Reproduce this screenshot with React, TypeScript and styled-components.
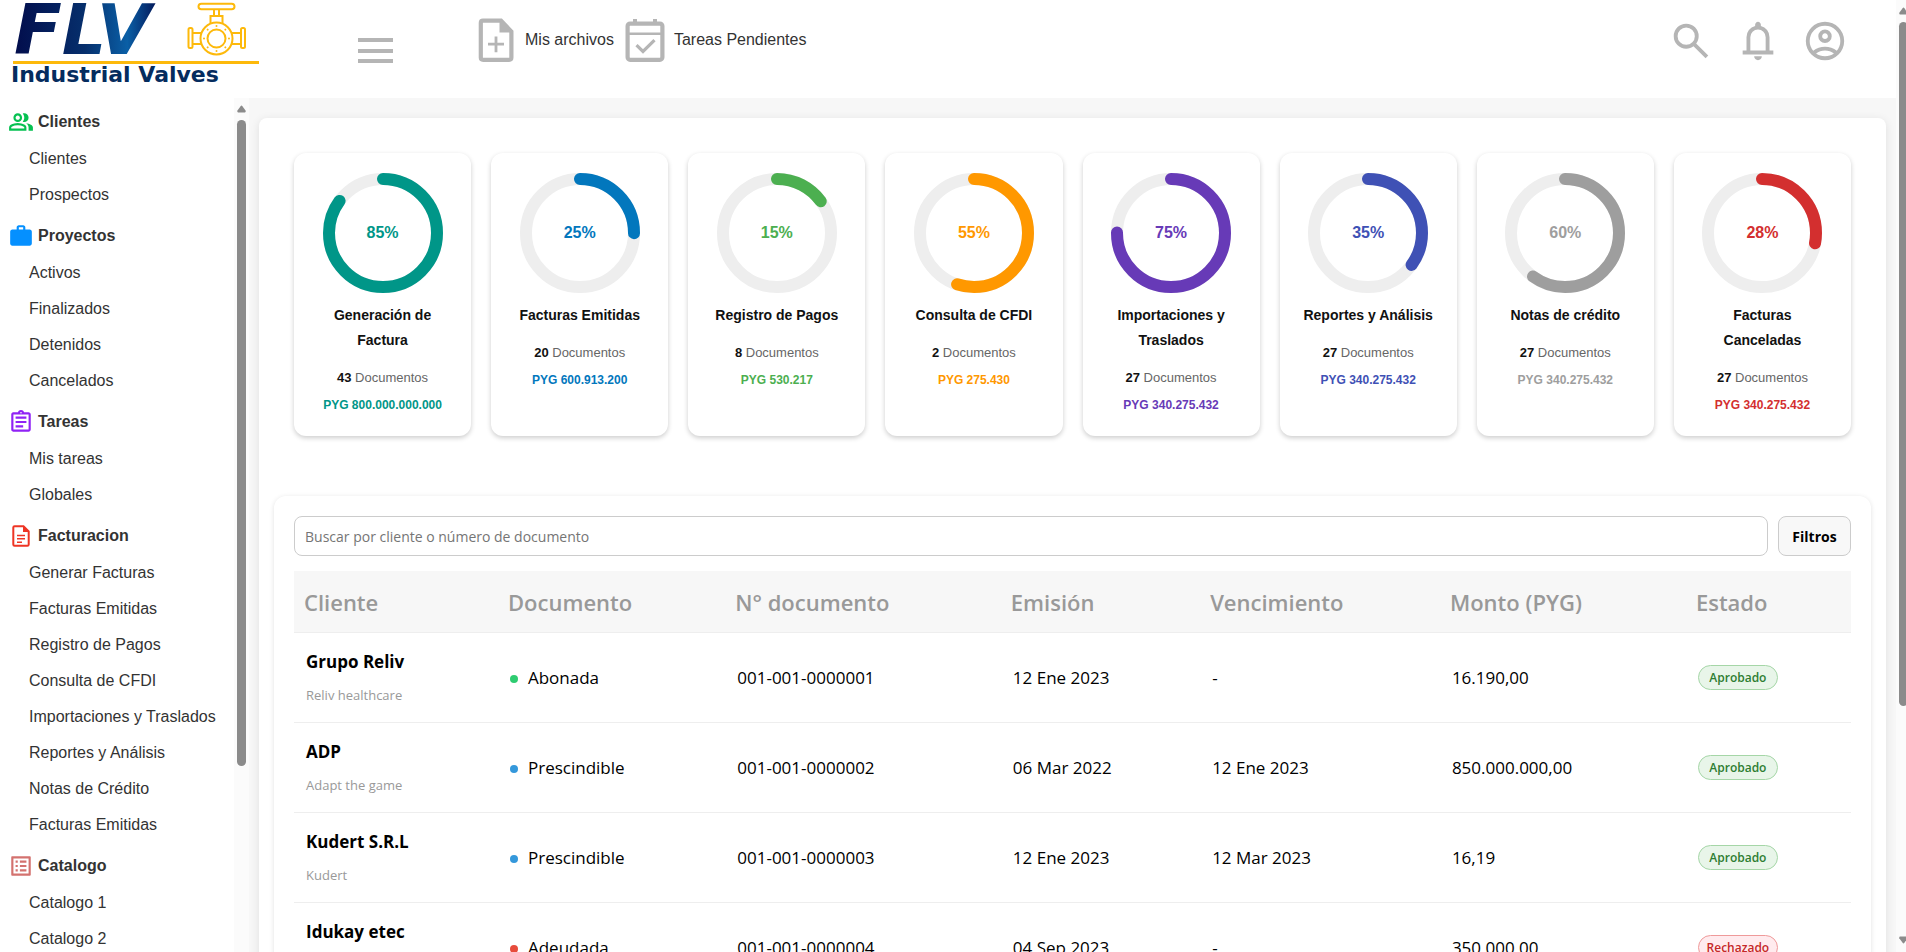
import React from "react";
import styled, { createGlobalStyle } from "styled-components";
import { MdOutlineAssignment, MdOutlineListAlt, MdWork } from "react-icons/md";

const GlobalStyle = createGlobalStyle`
  *, *::before, *::after { box-sizing: border-box; }
  body {
    margin: 0;
    background: #ffffff;
    color: #333333;
    font-family: Arial, "Liberation Sans", sans-serif;
    font-size: 16px;
  }
  button, input { font: inherit; }
  ul, p, h2, h3 { margin: 0; padding: 0; }
`;

const tableFont = `"Segoe UI", "Open Sans", "Noto Sans", sans-serif`;

/* ---------- shell ---------- */

const Shell = styled.div`
  display: flex;
  height: 100vh;
  overflow: hidden;
`;

const Page = styled.div`
  display: flex;
  flex-direction: column;
  flex: 1;
  min-width: 0;
`;

const Body = styled.div`
  display: flex;
  flex: 1;
  min-height: 0;
`;

const Rail = styled.div<{ $width: number }>`
  display: flex;
  flex-direction: column;
  flex: none;
  width: ${(p) => p.$width}px;
  padding: 7px 0 8px 3px;
  overflow: hidden;
  background: #fbfbfb;
`;

const RailArrow = styled.svg`
  flex: none;
  display: block;
  width: 9px;
  height: 8px;
  fill: #8b8b8b;

  &:last-child {
    margin-top: auto;
  }
`;

const RailThumb = styled.div<{ $share: number }>`
  flex: none;
  width: 9px;
  height: ${(p) => p.$share}%;
  margin-top: 7px;
  border-radius: 5px;
  background: #8b8b8b;
`;

/* ---------- header ---------- */

const Header = styled.header`
  display: flex;
  align-items: flex-start;
  flex: none;
  height: 98px;
  padding-right: 48px;
  background: #ffffff;
`;

const LogoLink = styled.a`
  display: block;
  flex: none;
  width: 358px;
  height: 88px;
`;

const MenuButton = styled.button`
  display: grid;
  align-content: space-between;
  width: 35px;
  height: 25px;
  margin: 38px 77px 0 0;
  padding: 0;
  border: 0;
  background: none;
  cursor: pointer;
`;

const MenuBar = styled.span`
  display: block;
  height: 4px;
  background: #b5b5b5;
`;

const QuickLinks = styled.nav`
  display: flex;
  flex: 1;
  gap: 5px;
  padding-top: 15px;
`;

const QuickLink = styled.a`
  display: flex;
  align-items: center;
  gap: 3px;
  height: 50px;
  color: #333333;
  text-decoration: none;
`;

const QuickIcon = styled.svg`
  display: block;
  width: 52px;
  height: 52px;
  fill: none;
  stroke: #b5b5b5;
`;

const Tools = styled.div`
  display: flex;
  gap: 21px;
  padding-top: 18px;
`;

const ToolButton = styled.button`
  width: 46px;
  height: 46px;
  padding: 0;
  border: 0;
  background: none;
  color: #b5b5b5;
  cursor: pointer;
`;

const SymbolSvg = styled.svg`
  display: block;
  width: 100%;
  height: 100%;
  fill: currentColor;
`;

/* ---------- sidebar ---------- */

const Sidebar = styled.nav`
  flex: none;
  width: 234px;
  padding-top: 5px;
  overflow: hidden;
  background: #ffffff;
`;

const Group = styled.section`
  margin-bottom: 4px;
`;

const GroupTitle = styled.h2`
  display: flex;
  align-items: center;
  gap: 4px;
  height: 38px;
  padding-left: 8px;
  font-size: 16px;
  font-weight: 700;
`;

const GroupIcon = styled.span<{ $color: string }>`
  flex: none;
  width: 26px;
  height: 26px;
  color: ${(p) => p.$color};

  svg {
    display: block;
    width: 100%;
    height: 100%;
  }
`;

const GroupList = styled.ul`
  list-style: none;
`;

const GroupItem = styled.a`
  display: block;
  padding-left: 29px;
  line-height: 36px;
  color: #333333;
  text-decoration: none;
  white-space: nowrap;
`;

/* ---------- main ---------- */

const Main = styled.main`
  flex: 1;
  min-width: 0;
  padding: 20px 10px 0;
  overflow: hidden;
  background: #f7f7f7;
`;

const Board = styled.div`
  padding: 35px 15px;
  border-radius: 8px;
  background: #ffffff;
  box-shadow: 0 2px 10px rgba(0, 0, 0, 0.1);
`;

const Cards = styled.div`
  display: grid;
  grid-template-columns: repeat(8, minmax(0, 1fr));
  gap: 20px;
  padding: 0 20px;
`;

const Card = styled.article`
  padding: 20px;
  border-radius: 12px;
  background: #ffffff;
  box-shadow: 0 2px 5px rgba(0, 0, 0, 0.2);
  text-align: center;
`;

const Dial = styled.div<{ $color: string }>`
  display: grid;
  place-items: center;
  width: 120px;
  height: 120px;
  margin: 0 auto 10px;
  color: ${(p) => p.$color};
  font-weight: 700;

  > * {
    grid-area: 1 / 1;
  }
`;

const CardTitle = styled.h3`
  color: #111111;
  font-size: 14px;
  font-weight: 700;
  line-height: 25px;
`;

const CardDocs = styled.p`
  margin-top: 13px;
  color: #666666;
  font-size: 13px;
  line-height: 24px;

  strong {
    color: #111111;
  }
`;

const CardAmount = styled.p<{ $color: string }>`
  margin: 4px -10px 0;
  color: ${(p) => p.$color};
  font-size: 12px;
  font-weight: 700;
  line-height: 22px;
`;

const Panel = styled.section`
  margin-top: 60px;
  padding: 20px;
  border-radius: 12px;
  background: #ffffff;
  box-shadow: 0 1px 5px rgba(0, 0, 0, 0.12);
  font-family: ${tableFont};
`;

const SearchRow = styled.form`
  display: flex;
  gap: 10px;
  margin-bottom: 15px;
`;

const SearchInput = styled.input`
  flex: 1;
  min-width: 0;
  height: 40px;
  padding: 0 10px;
  border: 1px solid #cccccc;
  border-radius: 8px;
  background: #ffffff;
  font-size: 14px;

  &::placeholder {
    color: #757575;
    opacity: 1;
  }
`;

const FilterButton = styled.button`
  width: 73px;
  height: 40px;
  padding: 0;
  border: 1px solid #cccccc;
  border-radius: 8px;
  background: #f8f8f8;
  color: #000000;
  font-size: 14px;
  font-weight: 700;
  cursor: pointer;
`;

const Table = styled.table`
  width: 100%;
  table-layout: fixed;
  border-spacing: 0;
  border-collapse: separate;
  color: #000000;
`;

const Th = styled.th<{ $width: number }>`
  width: ${(p) => p.$width}%;
  height: 62px;
  padding: 0 0 0 10px;
  border-bottom: 1px solid #eeeeee;
  background: #f7f7f7;
  color: #999999;
  font-size: 22px;
  font-weight: 600;
  text-align: left;
  white-space: nowrap;
`;

const Td = styled.td`
  height: 90px;
  padding: 0 0 0 12px;
  border-bottom: 1px solid #eeeeee;
  font-size: 17px;
`;

const ClientName = styled.strong`
  display: block;
  font-size: 17px;
  font-weight: 700;
  line-height: 34px;
`;

const ClientDetail = styled.small`
  display: block;
  color: #999999;
  font-size: 13px;
  line-height: 32px;
`;

const Status = styled.span<{ $color: string }>`
  &::before {
    content: "";
    display: inline-block;
    width: 8px;
    height: 8px;
    margin-right: 10px;
    border-radius: 50%;
    background: ${(p) => p.$color};
    vertical-align: middle;
  }
`;

const Badge = styled.span<{ $approved: boolean }>`
  display: inline-flex;
  align-items: center;
  justify-content: center;
  width: 80px;
  height: 25px;
  border: 1px solid ${(p) => (p.$approved ? "#a5d6a7" : "#ef9a9a")};
  border-radius: 13px;
  background: ${(p) => (p.$approved ? "#e8f5e9" : "#ffebee")};
  color: ${(p) => (p.$approved ? "#2e7d32" : "#c62828")};
  font-size: 12px;
  font-weight: 600;
  vertical-align: middle;
`;

/* ---------- drawings ---------- */

const SearchIcon = () => (
  <SymbolSvg viewBox="0 -960 960 960" aria-hidden="true">
    <path d="M784-120 532-372q-30 24-69 38t-83 14q-109 0-184.5-75.5T120-580q0-109 75.5-184.5T380-840q109 0 184.5 75.5T640-580q0 44-14 83t-38 69l252 252-56 56ZM380-400q75 0 127.5-52.5T560-580q0-75-52.5-127.5T380-760q-75 0-127.5 52.5T200-580q0 75 52.5 127.5T380-400Z" />
  </SymbolSvg>
);

const BellIcon = () => (
  <SymbolSvg viewBox="0 -960 960 960" aria-hidden="true">
    <path d="M160-200v-80h80v-280q0-83 50-147.500T420-792v-28q0-25 17.500-42.500T480-880q25 0 42.500 17.500T540-820v28q80 20 130 84.500T720-560v280h80v80H160Zm320 120q-33 0-56.500-23.500T400-160h160q0 33-23.500 56.500T480-80ZM320-280h320v-280q0-66-47-113t-113-47q-66 0-113 47t-47 113v280Z" />
  </SymbolSvg>
);

const AccountIcon = () => (
  <SymbolSvg viewBox="0 -960 960 960" aria-hidden="true">
    <path d="M234-276q51-39 114-61.5T480-360q69 0 132 22.5T726-276q35-41 54.5-93T800-480q0-133-93.5-226.5T480-800q-133 0-226.5 93.5T160-480q0 59 19.5 111t54.5 93Zm246-164q-59 0-99.5-40.5T340-580q0-59 40.5-99.5T480-720q59 0 99.5 40.5T620-580q0 59-40.5 99.5T480-440Zm0 360q-83 0-156-31.5T197-197q-54-54-85.5-127T80-480q0-83 31.5-156T197-763q54-54 127-85.5T480-880q83 0 156 31.5T763-763q54 54 85.5 127T880-480q0 83-31.5 156T763-197q-54 54-127 85.5T480-80Zm0-80q53 0 100-15.5t86-44.5q-39-29-86-44.5T480-280q-53 0-100 15.5T294-220q39 29 86 44.5T480-160Zm0-360q26 0 43-17t17-43q0-26-17-43t-43-17q-26 0-43 17t-17 43q0 26 17 43t43 17Z" />
  </SymbolSvg>
);

const PeopleIcon = () => (
  <SymbolSvg viewBox="0 -960 960 960" aria-hidden="true">
    <path d="M40-160v-112q0-34 17.5-62.5T104-378q62-31 126-46.5T360-440q66 0 130 15.5T616-378q29 15 46.5 43.5T680-272v112H40Zm720 0v-120q0-44-24.5-84.5T666-434q51 6 96 20.5t84 35.5q36 20 55 44.5t19 53.5v120H760ZM360-480q-66 0-113-47t-47-113q0-66 47-113t113-47q66 0 113 47t47 113q0 66-47 113t-113 47Zm400-160q0 66-47 113t-113 47q-11 0-28-2.5t-28-5.5q27-32 41.5-71t14.5-81q0-42-14.5-81T544-792q14-5 28-6.5t28-1.5q66 0 113 47t47 113ZM120-240h480v-32q0-11-5.5-20T580-306q-54-27-109-40.5T360-360q-56 0-111 13.5T140-306q-9 5-14.5 14t-5.5 20v32Zm240-320q33 0 56.5-23.5T440-640q0-33-23.5-56.5T360-720q-33 0-56.5 23.5T280-640q0 33 23.5 56.5T360-560Z" />
  </SymbolSvg>
);

const InvoiceIcon = () => (
  <svg viewBox="0 0 26 26" fill="none" stroke="currentColor" aria-hidden="true">
    <path d="M15.5 3.2H6.6Q5.3 3.2 5.3 4.5v17q0 1.3 1.3 1.3h12.8q1.3 0 1.3-1.3V8.4z" strokeWidth="2" />
    <path d="M15 3v6h6z" fill="currentColor" stroke="none" />
    <path d="M9 12.6h8M9 15.8h8M9 19.2h5" strokeWidth="1.5" />
  </svg>
);

const NewFileIcon = () => (
  <QuickIcon viewBox="0 0 52 52" aria-hidden="true">
    <path d="M31 6.7H13Q10.8 6.7 10.8 9v34.5q0 2.3 2.3 2.3h26q2.3 0 2.3-2.3V17.5z" strokeWidth="4.2" />
    <path d="M29.5 7v11.5h12z" fill="#b5b5b5" stroke="none" />
    <path d="M18 30.2h16M26 22.4v15.8" strokeWidth="2.8" />
  </QuickIcon>
);

const CalendarIcon = () => (
  <QuickIcon viewBox="0 0 52 52" aria-hidden="true">
    <rect x="8.6" y="9.6" width="34.8" height="36.2" rx="2.5" strokeWidth="4.2" />
    <path d="M16 5v5M36 5v5" strokeWidth="4" />
    <path d="M9 19.7h34" strokeWidth="2.6" />
    <path d="M17.5 31.2l6.500 6.300L35.500 26.200" strokeWidth="3.2" />
  </QuickIcon>
);

const bolts = [0, 45, 90, 135, 180, 225, 270, 315];

const Logo = () => (
  <svg width="268" height="88" viewBox="0 0 268 88" role="img" aria-label="FLV Industrial Valves">
    <defs>
      <linearGradient id="brand" x1="0" y1="0" x2="1" y2="0">
        <stop offset="0" stopColor="#020d4c" />
        <stop offset="0.5" stopColor="#062f6c" />
        <stop offset="0.8" stopColor="#0a5fa6" />
        <stop offset="1" stopColor="#04195a" />
      </linearGradient>
    </defs>
    <text
      x="14"
      y="54"
      fill="url(#brand)"
      fontFamily="DejaVu Sans, sans-serif"
      fontSize="70"
      fontStyle="italic"
      fontWeight="700"
    >
      FLV
    </text>
    <g fill="none" stroke="#fdb90b" strokeWidth="2">
      <rect x="198.5" y="3.7" width="36" height="5.6" rx="2.8" />
      <path d="M214 9.5v6.5M219 9.5v6.5M210.5 23.5V16h12v7.5" />
      <circle cx="216.5" cy="38.5" r="16" />
      <circle cx="216.5" cy="38.5" r="9" />
      <path d="M192.5 33h9M192.5 44h9M231.5 33h9M231.5 44h9" />
      <rect x="188.5" y="28" width="4" height="20" rx="1.5" />
      <rect x="241" y="28" width="4" height="20" rx="1.5" />
    </g>
    {bolts.map((angle) => (
      <circle key={angle} cx="216.5" cy="26" r="1" fill="#fdb90b" transform={`rotate(${angle} 216.5 38.5)`} />
    ))}
    <rect x="13" y="61" width="246" height="3" fill="#fdb90b" />
    <text x="11" y="82" fill="#052c5e" fontFamily="DejaVu Sans, sans-serif" fontSize="22" fontWeight="700">
      Industrial Valves
    </text>
  </svg>
);

const RADIUS = 54;
const LENGTH = 2 * Math.PI * RADIUS;

const Ring = ({ percent }: { percent: number }) => (
  <svg width="120" height="120" viewBox="0 0 120 120" fill="none" strokeWidth="12" aria-hidden="true">
    <circle cx="60" cy="60" r={RADIUS} stroke="#eeeeee" />
    <circle
      cx="60"
      cy="60"
      r={RADIUS}
      stroke="currentColor"
      strokeLinecap="round"
      strokeDasharray={`${(LENGTH * percent) / 100} ${LENGTH}`}
      transform="rotate(-90 60 60)"
    />
  </svg>
);

const ScrollRail = ({ width, share, endArrow }: { width: number; share: number; endArrow?: boolean }) => (
  <Rail $width={width} aria-hidden="true">
    <RailArrow viewBox="0 0 9 8">
      <path d="M3.6 1.2Q4.5 0 5.4 1.2L8.7 5.8Q9 7.5 7.8 7.5H1.2Q0 7.5 .3 5.8z" />
    </RailArrow>
    <RailThumb $share={share} />
    {endArrow && (
      <RailArrow viewBox="0 0 9 8">
        <path d="M3.6 6.8Q4.5 8 5.4 6.8L8.7 2.2Q9 .5 7.8 .5H1.2Q0 .5 .3 2.2z" />
      </RailArrow>
    )}
  </Rail>
);

/* ---------- data ---------- */

const groups = [
  { title: "Clientes", color: "#05c151", icon: <PeopleIcon />, items: ["Clientes", "Prospectos"] },
  {
    title: "Proyectos",
    color: "#0590ff",
    icon: <MdWork />,
    items: ["Activos", "Finalizados", "Detenidos", "Cancelados"],
  },
  { title: "Tareas", color: "#9022f5", icon: <MdOutlineAssignment />, items: ["Mis tareas", "Globales"] },
  {
    title: "Facturacion",
    color: "#ee3524",
    icon: <InvoiceIcon />,
    items: [
      "Generar Facturas",
      "Facturas Emitidas",
      "Registro de Pagos",
      "Consulta de CFDI",
      "Importaciones y Traslados",
      "Reportes y Análisis",
      "Notas de Crédito",
      "Facturas Emitidas",
    ],
  },
  { title: "Catalogo", color: "#d3726f", icon: <MdOutlineListAlt />, items: ["Catalogo 1", "Catalogo 2"] },
];

const cards = [
  { title: "Generación de Factura", percent: 85, docs: 43, amount: "800.000.000.000", color: "#009688" },
  { title: "Facturas Emitidas", percent: 25, docs: 20, amount: "600.913.200", color: "#0277bd" },
  { title: "Registro de Pagos", percent: 15, docs: 8, amount: "530.217", color: "#4caf50" },
  { title: "Consulta de CFDI", percent: 55, docs: 2, amount: "275.430", color: "#ff9800" },
  { title: "Importaciones y Traslados", percent: 75, docs: 27, amount: "340.275.432", color: "#673ab7" },
  { title: "Reportes y Análisis", percent: 35, docs: 27, amount: "340.275.432", color: "#3f51b5" },
  { title: "Notas de crédito", percent: 60, docs: 27, amount: "340.275.432", color: "#9e9e9e" },
  { title: "Facturas Canceladas", percent: 28, docs: 27, amount: "340.275.432", color: "#d32f2f" },
];

const columns = [
  { label: "Cliente", width: 13.1 },
  { label: "Documento", width: 14.6 },
  { label: "N° documento", width: 17.7 },
  { label: "Emisión", width: 12.8 },
  { label: "Vencimiento", width: 15.4 },
  { label: "Monto (PYG)", width: 15.8 },
  { label: "Estado", width: 10.6 },
];

const statusColors: Record<string, string> = {
  Abonada: "#2ecc71",
  Prescindible: "#3498db",
  Adeudada: "#e74c3c",
};

const rows = [
  { name: "Grupo Reliv", detail: "Reliv healthcare", status: "Abonada", number: "001-001-0000001", issued: "12 Ene 2023", due: "-", total: "16.190,00", approved: true },
  { name: "ADP", detail: "Adapt the game", status: "Prescindible", number: "001-001-0000002", issued: "06 Mar 2022", due: "12 Ene 2023", total: "850.000.000,00", approved: true },
  { name: "Kudert S.R.L", detail: "Kudert", status: "Prescindible", number: "001-001-0000003", issued: "12 Ene 2023", due: "12 Mar 2023", total: "16,19", approved: true },
  { name: "Idukay etec", detail: "Idukay", status: "Adeudada", number: "001-001-0000004", issued: "04 Sep 2023", due: "-", total: "350.000,00", approved: false },
];

/* ---------- app ---------- */

export default function App() {
  return (
    <Shell>
      <GlobalStyle />
      <Page>
        <Header>
          <LogoLink href="#">
            <Logo />
          </LogoLink>
          <MenuButton type="button" aria-label="Menú">
            <MenuBar />
            <MenuBar />
            <MenuBar />
          </MenuButton>
          <QuickLinks aria-label="Accesos">
            <QuickLink href="#">
              <NewFileIcon />
              Mis archivos
            </QuickLink>
            <QuickLink href="#">
              <CalendarIcon />
              Tareas Pendientes
            </QuickLink>
          </QuickLinks>
          <Tools>
            <ToolButton type="button" aria-label="Buscar">
              <SearchIcon />
            </ToolButton>
            <ToolButton type="button" aria-label="Notificaciones">
              <BellIcon />
            </ToolButton>
            <ToolButton type="button" aria-label="Cuenta">
              <AccountIcon />
            </ToolButton>
          </Tools>
        </Header>
        <Body>
          <Sidebar aria-label="Secciones">
            {groups.map((group) => (
              <Group key={group.title}>
                <GroupTitle>
                  <GroupIcon $color={group.color}>{group.icon}</GroupIcon>
                  {group.title}
                </GroupTitle>
                <GroupList>
                  {group.items.map((item, index) => (
                    <li key={index}>
                      <GroupItem href="#">{item}</GroupItem>
                    </li>
                  ))}
                </GroupList>
              </Group>
            ))}
          </Sidebar>
          <ScrollRail width={15} share={77} />
          <Main>
            <Board>
              <Cards>
                {cards.map((card) => (
                  <Card key={card.title}>
                    <Dial $color={card.color}>
                      <Ring percent={card.percent} />
                      <span>{card.percent}%</span>
                    </Dial>
                    <CardTitle>{card.title}</CardTitle>
                    <CardDocs>
                      <strong>{card.docs}</strong> Documentos
                    </CardDocs>
                    <CardAmount $color={card.color}>PYG {card.amount}</CardAmount>
                  </Card>
                ))}
              </Cards>
              <Panel>
                <SearchRow onSubmit={(e: React.FormEvent) => e.preventDefault()}>
                  <SearchInput
                    type="text"
                    aria-label="Buscar por cliente o número de documento"
                    placeholder="Buscar por cliente o número de documento"
                  />
                  <FilterButton type="button">Filtros</FilterButton>
                </SearchRow>
                <Table>
                  <thead>
                    <tr>
                      {columns.map((column) => (
                        <Th key={column.label} $width={column.width} scope="col">
                          {column.label}
                        </Th>
                      ))}
                    </tr>
                  </thead>
                  <tbody>
                    {rows.map((row) => (
                      <tr key={row.number}>
                        <Td>
                          <ClientName>{row.name}</ClientName>
                          <ClientDetail>{row.detail}</ClientDetail>
                        </Td>
                        <Td>
                          <Status $color={statusColors[row.status]}>{row.status}</Status>
                        </Td>
                        <Td>{row.number}</Td>
                        <Td>{row.issued}</Td>
                        <Td>{row.due}</Td>
                        <Td>{row.total}</Td>
                        <Td>
                          <Badge $approved={row.approved}>{row.approved ? "Aprobado" : "Rechazado"}</Badge>
                        </Td>
                      </tr>
                    ))}
                  </tbody>
                </Table>
              </Panel>
            </Board>
          </Main>
        </Body>
      </Page>
      <ScrollRail width={10} share={73} endArrow />
    </Shell>
  );
}
